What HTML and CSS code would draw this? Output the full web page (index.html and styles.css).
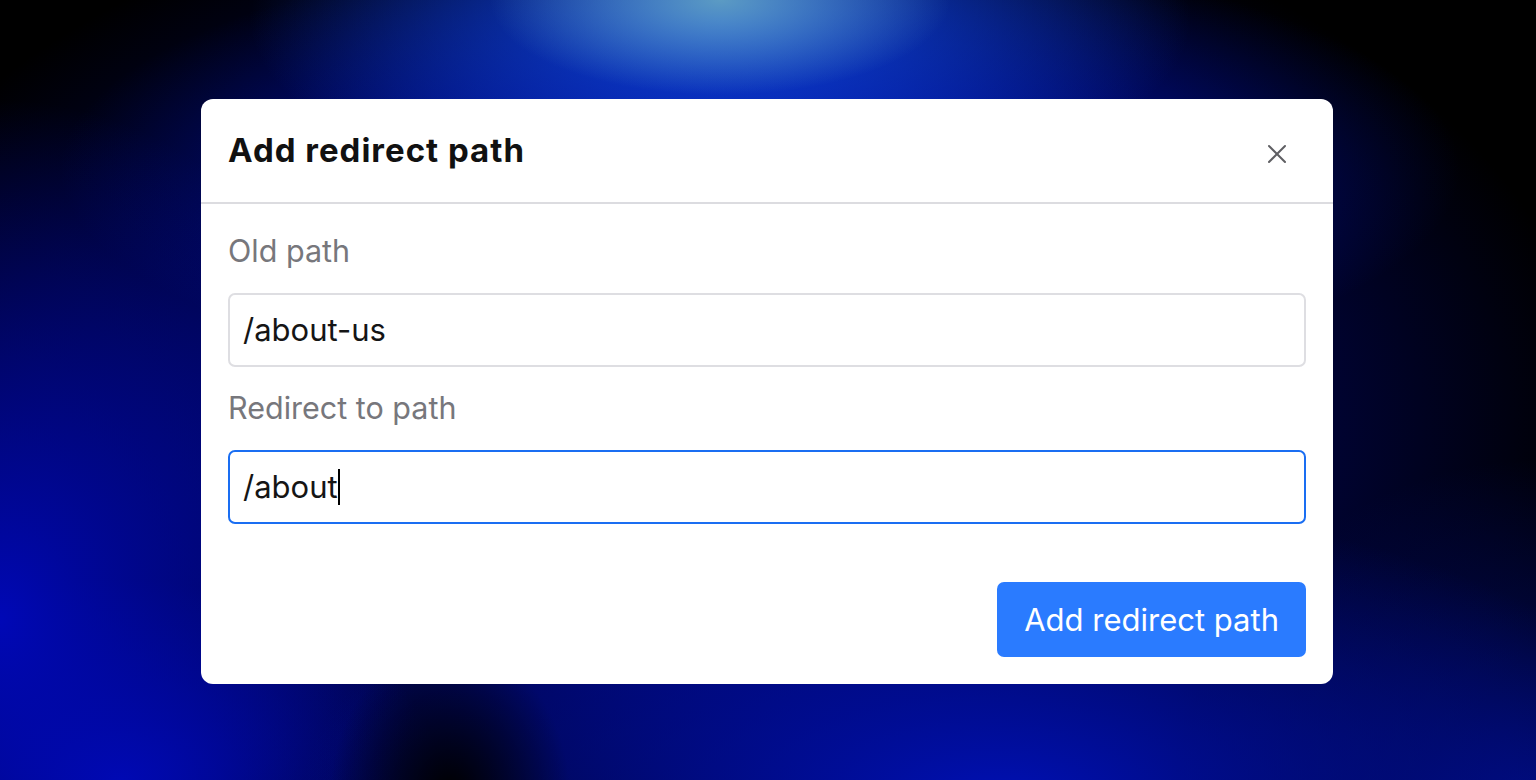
FILE: index.html
```html
<!DOCTYPE html>
<html lang="en">
<head>
    <meta charset="UTF-8">
    <meta name="viewport" content="width=device-width, initial-scale=1.0">
    <title>Add redirect path</title>

    <link rel="stylesheet" href="styles.css">
</head>
<body>

    <div class="modal">
        <div class="modal-header">
            <h2 class="modal-title">Add redirect path</h2>
            <button class="close-btn" aria-label="Close">
                <svg width="20" height="20" viewBox="0 0 20 20">
                    <path d="M2 2 L18 18 M18 2 L2 18" stroke="#5f5f63" stroke-width="2" stroke-linecap="round"/>
                </svg>
            </button>
        </div>

        <div class="modal-body">
            <div class="field">
                <label class="field-label">Old path</label>
                <div class="text-input">/about-us</div>
            </div>
            <div class="field">
                <label class="field-label">Redirect to path</label>
                <div class="text-input focused">/about<span class="caret"></span></div>
            </div>
        </div>

        <div class="modal-footer">
            <button class="primary-btn">Add redirect path</button>
        </div>
    </div>

</body>
</html>
```

FILE: styles.css
```css
html, body {
    height: 100%;
}
body {
    font-family: Inter, "Noto Sans", sans-serif;
    margin: 0;
    display: flex;
    justify-content: center;
    align-items: center;
    background-color: #000;
    background-image:
        radial-gradient(ellipse 230px 95px at 720px 0px, rgba(100, 165, 195, 0.9), rgba(100, 165, 195, 0) 100%),
        radial-gradient(ellipse 470px 190px at 720px 20px, rgba(15, 70, 215, 1), rgba(15, 70, 215, 0) 100%),
        radial-gradient(ellipse 120px 150px at 450px 795px, rgba(0, 0, 0, 1), rgba(0, 0, 0, 0) 100%),
        radial-gradient(ellipse 700px 300px at 1000px 800px, rgba(0, 16, 180, 1), rgba(0, 16, 180, 0) 100%),
        radial-gradient(ellipse 420px 520px at 0px 620px, rgba(0, 8, 182, 1), rgba(0, 8, 182, 0) 100%),
        radial-gradient(ellipse 320px 200px at 120px 780px, rgba(0, 10, 175, 1), rgba(0, 10, 175, 0) 100%),
        radial-gradient(ellipse 360px 360px at 1536px 820px, rgba(0, 12, 130, 0.9), rgba(0, 12, 130, 0) 100%),
        radial-gradient(ellipse 700px 230px at 760px 170px, rgba(0, 20, 190, 1), rgba(0, 20, 190, 0) 100%),
        radial-gradient(ellipse 900px 560px at 700px 430px, rgba(0, 10, 165, 1), rgba(0, 10, 165, 0) 100%);
}

.modal {
    width: 1132px;
    margin-right: 2px;
    margin-top: 2px;
    background-color: #fff;
    border-radius: 12px;
    overflow: hidden;
}

.modal-header {
    display: flex;
    justify-content: space-between;
    align-items: center;
    padding: 33px 27px 34px 27px;
    border-bottom: 2px solid #dcdce0;
}
.modal-title {
    margin: 0;
    font-size: 33px;
    line-height: 36px;
    font-weight: 700;
    color: #111;
    letter-spacing: 1px;
}
.close-btn {
    border: none;
    background: none;
    padding: 0;
    margin: 8px 19px 0 0;
    width: 20px;
    height: 20px;
    display: flex;
}

.modal-body {
    padding: 29px 27px 0 27px;
}
.field {
    margin-bottom: 23px;
}
.field-label {
    display: block;
    font-size: 30.5px;
    line-height: 36px;
    color: #77777c;
    margin-bottom: 24px;
}
.text-input {
    height: 70px;
    border: 2px solid #dedee2;
    border-radius: 7px;
    padding: 0 13px;
    display: flex;
    align-items: center;
    font-size: 31px;
    color: #151515;
}
.text-input.focused {
    border-color: #1a6ef2;
}
.caret {
    display: inline-block;
    width: 2px;
    height: 36px;
    background-color: #000;
}

.modal-footer {
    display: flex;
    justify-content: flex-end;
    padding: 35px 27px 27px 27px;
}
.primary-btn {
    font-family: Inter, "Noto Sans", sans-serif;
    font-size: 31px;
    color: #fff;
    background-color: #2a7bff;
    border: none;
    border-radius: 7px;
    height: 75px;
    padding: 0 27px;
}
```
